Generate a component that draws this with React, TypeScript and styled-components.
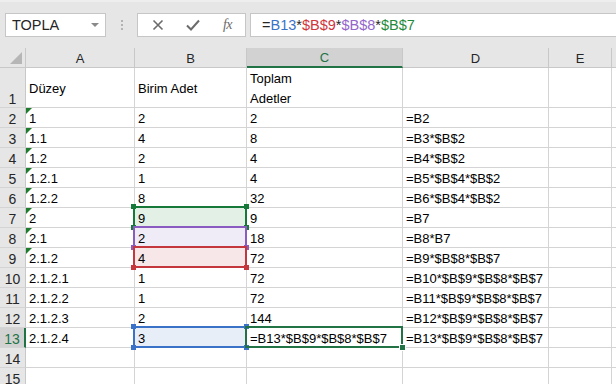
import React from 'react';
import styled, { createGlobalStyle } from 'styled-components';

type MarkColor = 'green' | 'purple' | 'red' | 'blue';

interface Row {
    n: number;
    a: string;
    b: string;
    c: string;
    d: string;
    flag?: boolean;
    mark?: MarkColor;
    corners?: 'all' | 'bottom';
    active?: boolean;
}

const markColors: Record<MarkColor, { line: string; fill: string }> = {
    green: { line: '#16793a', fill: '#e3f0e6' },
    purple: { line: '#8a5cc2', fill: '#efecf8' },
    red: { line: '#c4373d', fill: '#f8e7e8' },
    blue: { line: '#3a72c8', fill: '#e8eef8' },
};

const rows: Row[] = [
    { n: 2, a: '1', b: '2', c: '2', d: '=B2', flag: true },
    { n: 3, a: '1.1', b: '4', c: '8', d: '=B3*$B$2', flag: true },
    { n: 4, a: '1.2', b: '2', c: '4', d: '=B4*$B$2', flag: true },
    { n: 5, a: '1.2.1', b: '1', c: '4', d: '=B5*$B$4*$B$2', flag: true },
    { n: 6, a: '1.2.2', b: '8', c: '32', d: '=B6*$B$4*$B$2', flag: true },
    { n: 7, a: '2', b: '9', c: '9', d: '=B7', flag: true, mark: 'green', corners: 'all' },
    { n: 8, a: '2.1', b: '2', c: '18', d: '=B8*B7', flag: true, mark: 'purple', corners: 'bottom' },
    { n: 9, a: '2.1.2', b: '4', c: '72', d: '=B9*$B$8*$B$7', flag: true, mark: 'red', corners: 'bottom' },
    { n: 10, a: '2.1.2.1', b: '1', c: '72', d: '=B10*$B$9*$B$8*$B$7' },
    { n: 11, a: '2.1.2.2', b: '1', c: '72', d: '=B11*$B$9*$B$8*$B$7' },
    { n: 12, a: '2.1.2.3', b: '2', c: '144', d: '=B12*$B$9*$B$8*$B$7' },
    {
        n: 13,
        a: '2.1.2.4',
        b: '3',
        c: '=B13*$B$9*$B$8*$B$7',
        d: '=B13*$B$9*$B$8*$B$7',
        mark: 'blue',
        corners: 'all',
        active: true,
    },
    { n: 14, a: '', b: '', c: '', d: '' },
    { n: 15, a: '', b: '', c: '', d: '' },
];

const GlobalStyle = createGlobalStyle`
    body {
        margin: 0;
        background: #ffffff;
        overflow: hidden;
        font-family: 'Liberation Sans', Arial, sans-serif;
    }
`;

const Page = styled.div`
    width: 616px;
    height: 384px;
    overflow: hidden;
`;

const TopBar = styled.div`
    display: flex;
    align-items: flex-start;
    height: 48px;
    box-sizing: border-box;
    padding: 11px 0 0 5px;
    background: #e6e6e6;
    border-top: 2px solid #eeeeee;
`;

const NameBox = styled.div`
    display: flex;
    align-items: center;
    justify-content: space-between;
    width: 101px;
    height: 24px;
    box-sizing: border-box;
    padding: 0 6px 0 6px;
    background: #ffffff;
    border: 1px solid #c6c6c6;
    font-size: 14.5px;
    color: #262626;
`;

const DropArrow = styled.span`
    width: 0;
    height: 0;
    border-left: 4px solid transparent;
    border-right: 4px solid transparent;
    border-top: 4px solid #8a8a8a;
`;

const Grip = styled.div`
    display: flex;
    flex-direction: column;
    align-items: center;
    justify-content: center;
    gap: 2px;
    width: 31px;
    height: 24px;

    & > span {
        width: 2px;
        height: 2px;
        background: #b3b3b3;
    }
`;

const ButtonGroup = styled.div`
    display: flex;
    align-items: center;
    width: 109px;
    height: 24px;
    box-sizing: border-box;
    padding-left: 2px;
    background: #ffffff;
    border: 1px solid #c6c6c6;
`;

const ToolButton = styled.div`
    display: flex;
    align-items: center;
    justify-content: center;
    width: 36px;
    height: 22px;
    color: #6b6b6b;
`;

const FxLabel = styled.span`
    font-family: 'Liberation Serif', 'Times New Roman', serif;
    font-style: italic;
    font-size: 14px;
    color: #6b6b6b;
    letter-spacing: -0.5px;
`;

const FormulaInput = styled.div`
    flex: 1;
    display: flex;
    align-items: center;
    height: 24px;
    margin-left: 4px;
    box-sizing: border-box;
    padding-left: 11px;
    background: #ffffff;
    border: 1px solid #c6c6c6;
    border-right: none;
    font-size: 14.5px;
    color: #262626;
    white-space: pre;
`;

const Ref = styled.span<{ $color: string }>`
    color: ${(p) => p.$color};
`;

const Grid = styled.div`
    display: grid;
    grid-template-columns: 26px 109px 112px 156px 146px 63px 1fr;
    grid-auto-rows: 20px;
    font-size: 13px;
    color: #000000;
`;

const Corner = styled.div`
    position: relative;
    background: #e6e6e6;
    border-right: 1px solid #c8c8c8;
    border-bottom: 1px solid #c8c8c8;

    &::after {
        content: '';
        position: absolute;
        right: 3px;
        bottom: 3px;
        width: 12px;
        height: 12px;
        background: #b6b6b6;
        clip-path: polygon(100% 0, 100% 100%, 0 100%);
    }
`;

const ColHead = styled.div<{ $active?: boolean }>`
    display: flex;
    align-items: center;
    justify-content: center;
    background: ${(p) => (p.$active ? '#d2d2d2' : '#e6e6e6')};
    border-right: 1px solid #c8c8c8;
    border-bottom: ${(p) => (p.$active ? '2px solid #217346' : '1px solid #c8c8c8')};
    color: ${(p) => (p.$active ? '#217346' : '#262626')};
    box-sizing: border-box;
    padding-top: 1px;
`;

const RowHead = styled.div<{ $active?: boolean; $tall?: boolean }>`
    display: flex;
    align-items: flex-end;
    justify-content: center;
    line-height: 16px;
    box-sizing: border-box;
    background: ${(p) => (p.$active ? '#d2d2d2' : '#e6e6e6')};
    border-right: ${(p) => (p.$active ? '2px solid #217346' : '1px solid #c8c8c8')};
    border-bottom: 1px solid #d4d4d4;
    color: ${(p) => (p.$active ? '#217346' : '#262626')};
    font-size: 14px;
    grid-row: span ${(p) => (p.$tall ? 2 : 1)};
`;

const Cell = styled.div<{ $flag?: boolean; $tall?: boolean; $middle?: boolean }>`
    position: relative;
    display: flex;
    align-items: ${(p) => (p.$middle ? 'center' : 'flex-end')};
    padding: ${(p) => (p.$middle ? '3px 3px 0 3px' : '0 3px')};
    box-sizing: border-box;
    border-right: 1px solid #d4d4d4;
    border-bottom: 1px solid #d4d4d4;
    line-height: 16px;
    white-space: nowrap;
    grid-row: span ${(p) => (p.$tall ? 2 : 1)};

    &::before {
        content: '';
        display: ${(p) => (p.$flag ? 'block' : 'none')};
        position: absolute;
        left: 0;
        top: 0;
        width: 6px;
        height: 6px;
        background: #1e7b2c;
        clip-path: polygon(0 0, 100% 0, 0 100%);
    }
`;

const Wrapped = styled.div`
    white-space: normal;
    line-height: 20px;
    margin-bottom: -2px;
`;

const Text = styled.span`
    position: relative;
    z-index: 2;
`;

const Mark = styled.div<{ $color: MarkColor }>`
    position: absolute;
    z-index: 1;
    left: -2px;
    right: -1px;
    top: -2px;
    bottom: -1px;
    border: 2px solid ${(p) => markColors[p.$color].line};
    background: ${(p) => markColors[p.$color].fill};
`;

const Handle = styled.span<{ $color: string; $x: 'left' | 'right'; $y: 'top' | 'bottom' }>`
    position: absolute;
    ${(p) => p.$x}: -4px;
    ${(p) => p.$y}: -4px;
    width: 5px;
    height: 5px;
    background: ${(p) => p.$color};
    z-index: 3;
`;

const ActiveFrame = styled.div`
    position: absolute;
    z-index: 3;
    left: -2px;
    right: -1px;
    top: -2px;
    bottom: -1px;
    border: 2px solid #217346;

    &::after {
        content: '';
        position: absolute;
        right: -5px;
        bottom: -5px;
        width: 5px;
        height: 5px;
        background: #217346;
        border: 1px solid #ffffff;
    }
`;

const CrossIcon = () => (
    <svg width="12" height="12" viewBox="0 0 12 12">
        <path d="M1.5 1.5 L10.5 10.5 M10.5 1.5 L1.5 10.5" stroke="#6b6b6b" strokeWidth="1.6" fill="none" />
    </svg>
);

const CheckIcon = () => (
    <svg width="14" height="12" viewBox="0 0 14 12">
        <path d="M1 6.5 L5 10.5 L13 1.5" stroke="#6b6b6b" strokeWidth="2" fill="none" />
    </svg>
);

const RangeMark: React.FC<{ color: MarkColor; corners: 'all' | 'bottom' }> = ({ color, corners }) => {
    const line = markColors[color].line;
    return (
        <Mark $color={color}>
            {corners === 'all' && (
                <>
                    <Handle $color={line} $x="left" $y="top" />
                    <Handle $color={line} $x="right" $y="top" />
                </>
            )}
            <Handle $color={line} $x="left" $y="bottom" />
            <Handle $color={line} $x="right" $y="bottom" />
        </Mark>
    );
};

const App: React.FC = () => (
    <Page>
        <GlobalStyle />
        <TopBar>
            <NameBox>
                TOPLA
                <DropArrow />
            </NameBox>
            <Grip>
                <span />
                <span />
                <span />
            </Grip>
            <ButtonGroup>
                <ToolButton>
                    <CrossIcon />
                </ToolButton>
                <ToolButton>
                    <CheckIcon />
                </ToolButton>
                <ToolButton>
                    <FxLabel>fx</FxLabel>
                </ToolButton>
            </ButtonGroup>
            <FormulaInput>
                =<Ref $color="#3a72c8">B13</Ref>*<Ref $color="#cf353b">$B$9</Ref>*
                <Ref $color="#9366cc">$B$8</Ref>*<Ref $color="#1f8a3c">$B$7</Ref>
            </FormulaInput>
        </TopBar>
        <Grid>
            <Corner />
            <ColHead>A</ColHead>
            <ColHead>B</ColHead>
            <ColHead $active>C</ColHead>
            <ColHead>D</ColHead>
            <ColHead>E</ColHead>
            <ColHead />

            <RowHead $tall>1</RowHead>
            <Cell $tall $middle>
                Düzey
            </Cell>
            <Cell $tall $middle>
                Birim Adet
            </Cell>
            <Cell $tall>
                <Wrapped>
                    Toplam
                    <br />
                    Adetler
                </Wrapped>
            </Cell>
            <Cell $tall />
            <Cell $tall />
            <Cell $tall />

            {rows.map((r) => (
                <React.Fragment key={r.n}>
                    <RowHead $active={r.active}>{r.n}</RowHead>
                    <Cell $flag={r.flag}>
                        <Text>{r.a}</Text>
                    </Cell>
                    <Cell>
                        {r.mark && <RangeMark color={r.mark} corners={r.corners ?? 'all'} />}
                        <Text>{r.b}</Text>
                    </Cell>
                    <Cell>
                        {r.active && <ActiveFrame />}
                        <Text>{r.c}</Text>
                    </Cell>
                    <Cell>
                        <Text>{r.d}</Text>
                    </Cell>
                    <Cell />
                    <Cell />
                </React.Fragment>
            ))}
        </Grid>
    </Page>
);

export default App;
